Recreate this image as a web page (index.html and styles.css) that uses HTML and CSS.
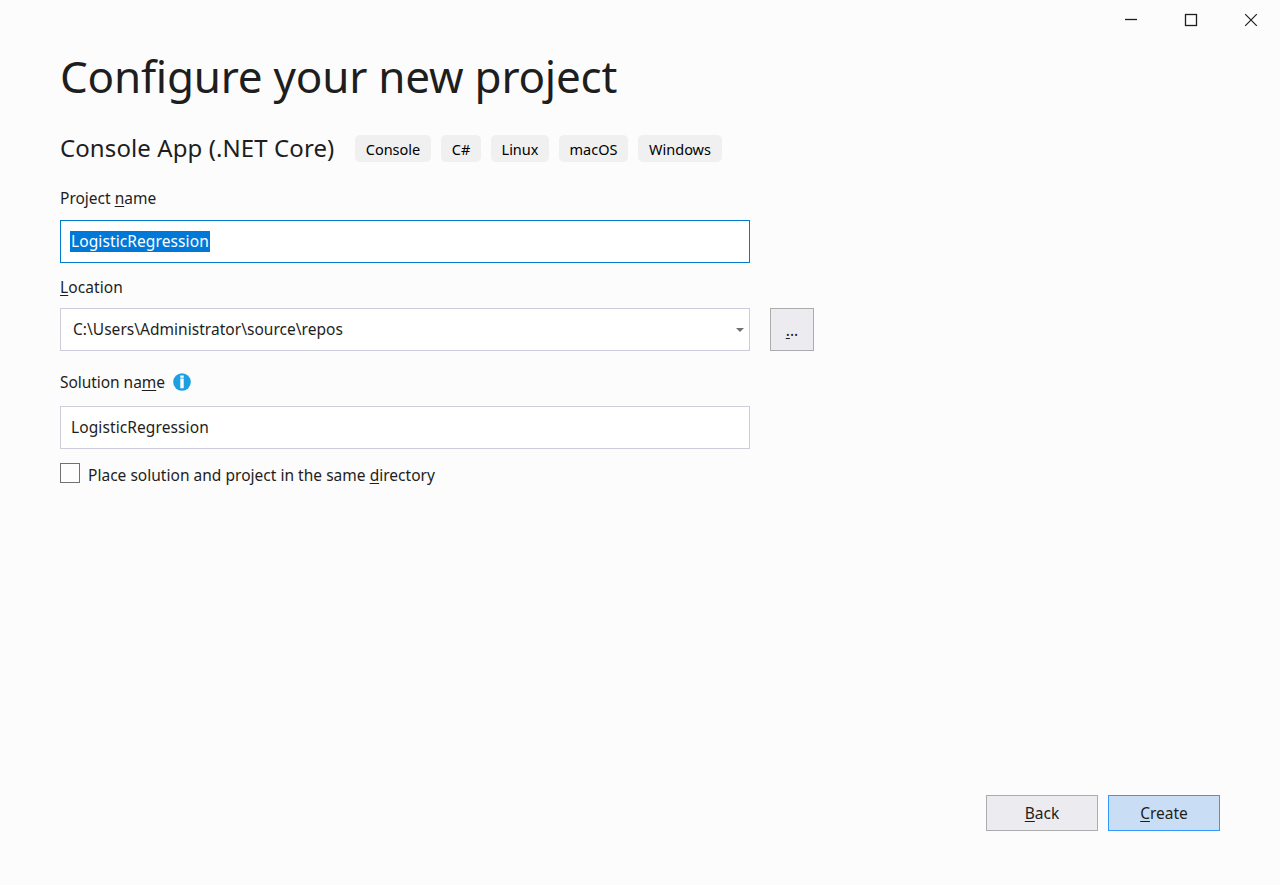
FILE: index.html
```html
<!DOCTYPE html>
<html lang="en">
<head>
<meta charset="utf-8">
<title>Configure your new project</title>
<link rel="stylesheet" href="styles.css">
</head>
<body>
<div class="window">
  <header class="titlebar">
    <svg class="caption" viewBox="0 0 14 14"><path d="M1 6.5h12" stroke="#1e1e1e" stroke-width="1.3"/></svg>
    <svg class="caption" viewBox="0 0 14 14"><rect x="1.5" y="1.5" width="11" height="11" fill="none" stroke="#1e1e1e" stroke-width="1.3"/></svg>
    <svg class="caption" viewBox="0 0 14 14"><path d="M1.2 1.2l11.6 11.6M12.8 1.2L1.2 12.8" stroke="#1e1e1e" stroke-width="1.2"/></svg>
  </header>
  <main class="content">
    <h1 class="title"><span>Configure your new project</span></h1>
    <div class="template">
      <h2 class="template-name"><span>Console App (.NET Core)</span></h2>
      <div class="tags">
        <span class="tag tag-console">Console</span>
        <span class="tag tag-csharp">C#</span>
        <span class="tag tag-linux">Linux</span>
        <span class="tag tag-macos">macOS</span>
        <span class="tag tag-windows">Windows</span>
      </div>
    </div>
    <div class="label label-project"><span>Project <u>n</u>ame</span></div>
    <div class="field field-focus"><span class="selected">LogisticRegression</span></div>
    <div class="label label-location"><span><u>L</u>ocation</span></div>
    <div class="location-row">
      <div class="field field-combo">
        <span class="path">C:\Users\Administrator\source\repos</span>
        <svg class="arrow" viewBox="0 0 8 4"><path d="M0 0h8L4 4z" fill="#717171"/></svg>
      </div>
      <div class="browse"><span><u>.</u>..</span></div>
    </div>
    <div class="label label-solution">
      <span>Solution na<u>m</u>e</span>
      <svg class="info" viewBox="0 0 18 18"><circle cx="9" cy="9" r="8.8" fill="#1ba1e2"/><path d="M7.3 2.5h3.4v2.3H7.3zM7.3 5.6h3.4v9.6H7.3z" fill="#fff"/></svg>
    </div>
    <div class="field field-solution"><span class="solution">LogisticRegression</span></div>
    <div class="check-row">
      <span class="checkbox"></span>
      <span class="check-text">Place solution and project in the same <u>d</u>irectory</span>
    </div>
  </main>
  <footer class="actions">
    <div class="button"><span><u>B</u>ack</span></div>
    <div class="button button-primary"><span><u>C</u>reate</span></div>
  </footer>
</div>
</body>
</html>
```
FILE: styles.css
```css
* { box-sizing: border-box; }
body {
  margin: 0;
  background: #fcfcfc;
  color: #1e1e1e;
  font: 15.5px/22px "Noto Sans", "Open Sans", sans-serif;
}
u { text-decoration: underline 1px; text-underline-offset: 2px; text-decoration-skip-ink: none; }
.window { display: flex; flex-direction: column; width: 1280px; height: 885px; }
.titlebar { display: flex; justify-content: flex-end; gap: 46px; height: 46px; padding: 13px 22px 0 0; }
.caption { width: 14px; height: 14px; }
.content { flex: 1; padding: 0 60px; }
.title { margin: 0; font-size: 44px; line-height: 60px; font-weight: 400; letter-spacing: -0.23px; white-space: nowrap; }
.template { display: flex; height: 27px; margin-top: 29px; }
.template-name { width: 295px; margin: 0; font-size: 24px; line-height: 25px; font-weight: 400; letter-spacing: 0.09px; white-space: nowrap; }
.tags { display: flex; gap: 10px; }
.tag { height: 27px; border-radius: 5px; background: #f0f0f0; color: #000; font-size: 14.5px; line-height: 28px; text-align: center; }
.tag-console { width: 76px; }
.tag-csharp { width: 40px; }
.tag-linux { width: 58px; }
.tag-macos { width: 69px; }
.tag-windows { width: 84px; }
.label { display: flex; height: 22px; white-space: nowrap; }
.label-project { margin: 25px 0 11px; }
.label-location { margin: 13px 0 10px; letter-spacing: 0.1px; }
.label-solution { gap: 8px; margin: 20px 0 13px; letter-spacing: -0.05px; }
.field { display: flex; align-items: center; width: 690px; height: 43px; padding: 0 10px; border: 1px solid #cccedb; background: #fff; }
.field-focus { padding-left: 9px; border-color: #007acc; }
.selected { padding: 0 1px; height: 21px; line-height: 21px; letter-spacing: 0.1px; background: #0078d7; color: #fff; }
.path { margin-bottom: 2px; letter-spacing: 0.03px; }
.solution { margin-bottom: 2px; letter-spacing: 0.1px; }
.location-row { display: flex; gap: 20px; }
.field-combo { justify-content: space-between; padding: 0 5px 0 12px; }
.arrow { width: 8px; height: 4px; }
.browse { display: flex; align-items: center; justify-content: center; width: 44px; height: 43px; border: 1px solid #acacac; background: #ececf0; }
.info { width: 18px; height: 18px; margin-top: 2px; }
.check-row { display: flex; gap: 8px; margin-top: 14px; }
.checkbox { width: 20px; height: 20px; border: 1px solid #717171; background: #fefefe; }
.check-text { margin-top: 1px; letter-spacing: 0.02px; white-space: nowrap; }
.actions { display: flex; justify-content: flex-end; gap: 10px; height: 90px; padding-right: 60px; }
.button { display: flex; align-items: center; justify-content: center; width: 112px; height: 36px; border: 1px solid #acacac; background: #ececf0; }
.button-primary { border-color: #3399ff; background: #c9def5; }
```
